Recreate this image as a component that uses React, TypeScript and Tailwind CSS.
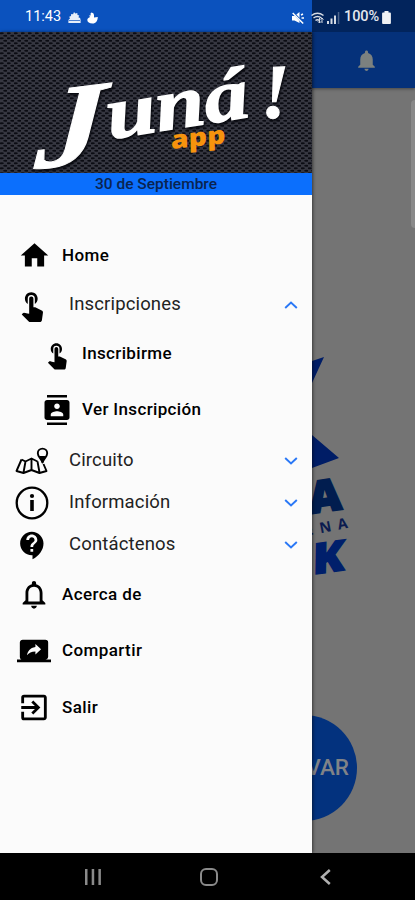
import type { ReactNode } from "react";
import {
  MdContacts,
  MdContactSupport,
  MdExitToApp,
  MdHome,
  MdNotifications,
  MdNotificationsNone,
  MdScreenShare,
  MdTouchApp,
} from "react-icons/md";

function StatusBar() {
  return (
    <div className="flex h-8 items-center pt-[3px] pr-[24px] pl-[25px] text-white">
      <span className="w-[38px] text-[14.500px] leading-none whitespace-nowrap">11:43</span>
      <svg className="ml-[5px]" width="13" height="12" viewBox="0 0 13 12" fill="currentColor">
        <path d="M6 0l1.3 1.6 2-.6.2 2 1.8.6-.9 1.7A2.6 2.6 0 0 1 12.6 8v3H.4V9A2.6 2.6 0 0 1 2 6.500L1.200 4.800l1.800-.9L3.200 2l1.900.2z" opacity=".9" />
        <path d="M1 8.500h11" stroke="#0b52be" strokeWidth=".7" />
      </svg>
      <svg className="ml-[6px]" width="11" height="12" viewBox="0 0 11 12" fill="currentColor">
        <path d="M4.500 0.500A2.600 2.600 0 0 1 7 3v2.500L10.800 5C10.600 9 9 11.500 5.500 11.500 2.500 11.500.3 10 .3 8c0-1.500 1.200-2.500 3-3L1.800 3.800l2-.6C3.300 2 3.500 1 4.500.5z" />
      </svg>
      <div className="flex-1" />
      <svg width="12" height="14" viewBox="0 0 12 14" fill="currentColor">
        <path d="M0 5h2.500L7.500 1v11L2.500 9.500H0z" />
        <path d="M1 1.500l10.500 11" stroke="#0b52be" strokeWidth="2.200" />
        <path d="M.7 2l10.500 10.500M9 4l2-1M9.500 7H12" stroke="white" strokeWidth="1.500" />
      </svg>
      <svg className="ml-[7px]" width="13" height="12" viewBox="0 0 13 12" fill="none" stroke="#d5dae3" strokeWidth="1.500">
        <path d="M.5 3.500q6-4.600 12 0M2.500 6q4-3.200 8 0M4.500 8.500q2-1.500 4 0" />
        <path d="M8.500 6v5M6.800 9.300L8.500 11l1.700-1.700M11 11V6M9.500 7.500L11 6l1.500 1.500" strokeWidth="1" />
      </svg>
      <svg className="ml-[3px]" width="13" height="12" viewBox="0 0 13 12" fill="#d5dae3">
        <path d="M0 9h2v3H0zM3.500 6.500h2V12h-2zM7 3.500h2V12H7z" />
        <path d="M10.800 0h1.500v12h-1.500z" opacity=".35" />
      </svg>
      <span className="ml-[4px] w-[37px] text-[14.500px] leading-none font-medium tracking-[-0.1px] whitespace-nowrap text-[#e4e7ed]">
        100%
      </span>
      <svg className="ml-px" width="9" height="13" viewBox="0 0 9 13" fill="#f0f1f4">
        <path d="M2.500 0h4v1.500H8A.9.9 0 0 1 8.900 2.400v9.700a.9.9 0 0 1-.9.900H1a.9.9 0 0 1-.9-.9V2.400A.9.9 0 0 1 1 1.500h1.500z" />
      </svg>
    </div>
  );
}

function Banner() {
  return (
    <svg className="block h-[141px] w-[312px] shrink-0" viewBox="0 0 312 141">
      <defs>
        <pattern id="mesh" width="7" height="5" patternUnits="userSpaceOnUse">
          <rect width="7" height="5" fill="#363741" />
          <ellipse cx="1.750" cy="1.250" rx="2.100" ry="1" fill="#0b0c13" />
          <ellipse cx="5.250" cy="3.750" rx="2.100" ry="1" fill="#0b0c13" />
        </pattern>
      </defs>
      <rect width="312" height="141" fill="url(#mesh)" />
      <g
        fill="white"
        stroke="white"
        fontFamily="'Liberation Serif', serif"
        fontWeight="700"
        fontStyle="italic"
        style={{ filter: "drop-shadow(1px 2px 1px #08090f)" }}
      >
        <text transform="translate(34 137) rotate(-7) skewX(-10) scale(1.22 1)" fontSize="116" strokeWidth="1">J</text>
        <text transform="translate(110 107) rotate(-9)" fontSize="74" strokeWidth="1.500" textLength="143" lengthAdjust="spacingAndGlyphs">uná</text>
        <text transform="translate(261 86) rotate(-2)" fontSize="77" strokeWidth="1">!</text>
      </g>
      <text
        transform="translate(171 117) rotate(-6) skewX(-5)"
        fill="#f7930d"
        fontFamily="'Open Sans', sans-serif"
        fontWeight="800"
        fontSize="25"
        textLength="55"
        lengthAdjust="spacingAndGlyphs"
      >
        app
      </text>
    </svg>
  );
}

function Chevron({ up = false }: { up?: boolean }) {
  return (
    <svg className={up ? "" : "rotate-180"} width="14" height="8" viewBox="0 0 14 8" fill="none" stroke="#2a78f6" strokeWidth="1.900">
      <path d="M1.200 7L7 1.500 12.800 7" />
    </svg>
  );
}

function Item({ icon, label }: { icon: ReactNode; label: string }) {
  return (
    <div className="flex h-[56.500px] items-center pl-[17px]">
      <div className="flex w-[34px] justify-center">{icon}</div>
      <span className="ml-[11px] text-[17px] font-medium tracking-[0.4px]">{label}</span>
    </div>
  );
}

function Group({ icon, label, up }: { icon: ReactNode; label: string; up?: boolean }) {
  return (
    <div className="flex h-[42.300px] items-center pr-[14px] pl-[15px]">
      <div className="flex w-[34px] justify-center">{icon}</div>
      <span className="ml-5 flex-1 text-[18.500px] tracking-[0.15px] text-[#222]">{label}</span>
      <Chevron up={up} />
    </div>
  );
}

function SubItem({ icon, label }: { icon: ReactNode; label: string }) {
  return (
    <div className="flex h-[56px] items-center pl-[42px]">
      <div className="flex w-[30px] justify-center">{icon}</div>
      <span className="ml-[10px] text-[17px] font-medium tracking-[0.35px]">{label}</span>
    </div>
  );
}

function MapIcon() {
  return (
    <svg width="34" height="30" viewBox="0 0 34 30" fill="none" stroke="black" strokeWidth="1.900" strokeLinejoin="round">
      <path d="M6.500 13.500L1.500 25l7 2 8-3 8 3 7-2-3-7M6.500 13.500l4 2 6-3 6 3M10.500 15.500l-2 11M16.500 12.500V24M22.500 15.500l2 11" />
      <path d="M27.500 16.500c-1-4-4.700-5.500-4.700-9.200a4.700 4.700 0 0 1 9.400 0c0 3.700-3.700 5.200-4.700 9.200z" />
      <path d="M25.500 11h4l-2 5z" fill="black" />
    </svg>
  );
}

function InfoIcon() {
  return (
    <svg width="34" height="34" viewBox="0 0 34 34">
      <circle cx="17" cy="17" r="15.300" fill="none" stroke="black" strokeWidth="2.300" />
      <circle cx="17" cy="10" r="2.100" />
      <path d="M15.200 14h3.600v11h-3.600z" />
    </svg>
  );
}

function Drawer() {
  return (
    <aside className="absolute top-8 left-0 flex h-[821px] w-[312px] flex-col bg-[#fbfbfb] text-black shadow-[1px_0_3px_rgba(0,0,0,0.5)]">
      <Banner />
      <div className="flex h-[22px] items-center justify-center bg-[#0b6ffd] pt-px text-[15.500px] font-medium text-[#0a2450]">
        30 de Septiembre
      </div>
      <nav className="pt-[32.300px]">
        <Item icon={<MdHome size={33} />} label="Home" />
        <Group icon={<MdTouchApp size={34} />} label="Inscripciones" up />
        <SubItem icon={<MdTouchApp size={31} />} label="Inscribirme" />
        <SubItem icon={<MdContacts size={30} />} label="Ver Inscripción" />
        <div className="pt-[1.500px]">
          <Group icon={<MapIcon />} label="Circuito" />
          <Group icon={<InfoIcon />} label="Información" />
          <Group icon={<MdContactSupport size={33} />} label="Contáctenos" />
        </div>
        <Item icon={<MdNotificationsNone size={35} />} label="Acerca de" />
        <Item icon={<MdScreenShare size={34} />} label="Compartir" />
        <Item icon={<MdExitToApp size={35} />} label="Salir" />
      </nav>
    </aside>
  );
}

function EventLogo() {
  return (
    <svg className="block h-[250px] w-[103px] overflow-visible" viewBox="312 340 103 250" fontFamily="'Open Sans', sans-serif" fontWeight="800">
      <path d="M312 361l12-4-12 26zM312 435l27 23-27 10z" fill="#001d66" />
      <text transform="translate(279 518) rotate(-8) skewX(-3)" fontSize="44" fill="#011d4f" stroke="#011d4f" strokeWidth="2" textLength="64" lengthAdjust="spacingAndGlyphs">VA</text>
      <text transform="translate(306 536) rotate(-11)" fontSize="14.500" fontWeight="700" fill="#0b1b4f" textLength="43">ENA</text>
      <text transform="translate(287 578) rotate(-8) skewX(-9)" fontSize="42" fill="#001f6b" stroke="#001f6b" strokeWidth="1.500" textLength="58" lengthAdjust="spacingAndGlyphs">EK</text>
    </svg>
  );
}

function Backdrop() {
  return (
    <main className="flex h-[821px] flex-col items-end overflow-hidden bg-[#747474]">
      <div className="flex h-[56px] w-full items-center justify-end bg-[#05317a] pr-[36px] text-[#7c817f] shadow-[0_1px_3px_rgba(0,0,0,0.4)]">
        <MdNotifications size={25} />
      </div>
      <div className="mt-3 h-[128px] w-[4px] rounded-l-sm bg-[#898989]" />
      <div className="mt-[112px]">
        <EventLogo />
      </div>
      <div className="mt-[125px] mr-[58px] flex size-[106px] items-center justify-end rounded-full bg-[#03327e] pr-[8px] text-[22.500px] font-medium text-[#808387]">
        RESERVAR
      </div>
    </main>
  );
}

function NavBar() {
  return (
    <footer className="flex h-[47px] items-center bg-black text-[#8a8a8a]">
      <svg className="ml-[85px]" width="16" height="16" viewBox="0 0 16 16" fill="currentColor">
        <path d="M0 0h2.500v16H0zM6.700 0h2.500v16H6.700zM13.400 0h2.500v16h-2.500z" />
      </svg>
      <div className="ml-[99px] size-[18px] rounded-[6px] border-[2.500px] border-current" />
      <svg className="ml-[102px]" width="11" height="16" viewBox="0 0 11 16" fill="none" stroke="#b0b0b0" strokeWidth="2.500">
        <path d="M9.800 1L2 8l7.800 7" />
      </svg>
    </footer>
  );
}

export default function App() {
  return (
    <div className="relative h-[900px] w-[415px] overflow-hidden bg-black font-['Roboto',sans-serif]">
      <div className="bg-[linear-gradient(90deg,#0b52be_312px,#02245c_312px)]">
        <StatusBar />
      </div>
      <Backdrop />
      <Drawer />
      <NavBar />
    </div>
  );
}
